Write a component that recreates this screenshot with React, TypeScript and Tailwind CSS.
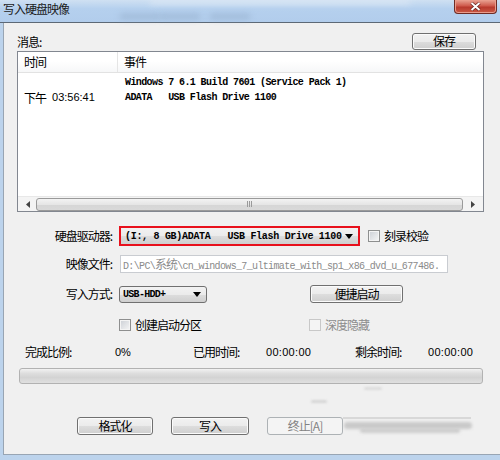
/**
 * 写入硬盘映像 — Win7 style dialog
 */

const BTN =
  "flex items-center justify-center rounded-[3px] border border-[#707070] bg-[linear-gradient(#f2f2f2_0%,#ebebeb_50%,#dddddd_51%,#cfcfcf_100%)] shadow-[inset_0_0_0_1px_#fbfbfb] text-[12px] tracking-[-1px] text-black";

const CJK = "font-['Noto_Sans_CJK_SC',sans-serif]";
const MONO = "font-['Liberation_Mono',monospace] font-bold text-[10px] whitespace-pre";
const NUM = "font-['Liberation_Sans',sans-serif] text-[11px]";

function Arrow() {
  return (
    <svg width="8" height="5" viewBox="0 0 8 5" aria-hidden="true">
      <path d="M0 0h8L4 5z" fill="#000" />
    </svg>
  );
}

function CheckBox({ label, disabled }: { label: string; disabled?: boolean }) {
  return (
    <div className="flex items-center gap-[4px]">
      <span
        className={
          disabled
            ? "h-[12px] w-[12px] border border-[#c8c8c8] bg-[#f4f4f4]"
            : "h-[12px] w-[12px] border border-[#8e8f8f] bg-[linear-gradient(135deg,#cbcfd5,#f6f6f6)] shadow-[inset_0_0_0_1px_#f4f4f4]"
        }
      />
      <span className={"text-[12px] tracking-[-1px] " + (disabled ? "text-[#8c8c8c]" : "text-black")}>
        {label}
      </span>
    </div>
  );
}

function Label({ text }: { text: string }) {
  return <span className="w-[108px] text-right text-[12px] tracking-[-1px]">{text}</span>;
}

export default function App() {
  return (
    <div className={"relative h-[460px] w-[500px] overflow-hidden bg-[#bcd3ec] text-black " + CJK}>
      {/* Title bar */}
      <div className="relative flex h-[23px] border-b border-[#5d6976] bg-[linear-gradient(#cfe0f2,#b5d0ee_40%,#b2cdec)]">
        <div className="pointer-events-none absolute left-[120px] top-[14px] h-[5px] w-[40px] bg-[#8fa9c6] opacity-60 blur-[3px]" />
        <div className="pointer-events-none absolute left-[160px] top-[14px] h-[5px] w-[40px] bg-[#8fa9c6] opacity-60 blur-[3px]" />
        <div className="pointer-events-none absolute left-[210px] top-[14px] h-[5px] w-[40px] bg-[#8fa9c6] opacity-60 blur-[3px]" />
        <div className="pointer-events-none absolute left-[150px] top-0 h-[4px] w-[260px] bg-[#e6eef7] opacity-70 blur-[3px]" />
        <span className="pl-[3px] pt-[1px] text-[12px] leading-[16px] tracking-[-1px] text-[#1b1b1b]">
          写入硬盘映像
        </span>
        <div className="ml-auto mr-[3px] flex h-[14px] w-[43px] items-center justify-center rounded-b-[4px] border border-t-0 border-[#6e2b24] bg-[linear-gradient(#e8a393,#cf5a4c_45%,#b8392d_55%,#c95a45)] shadow-[inset_0_0_0_1px_#e99c8c]">
          <svg width="11" height="9" viewBox="0 0 11 9" aria-hidden="true">
            <path d="M1.5 1l8 7M9.5 1l-8 7" stroke="#5a1c16" strokeWidth="3.2" />
            <path d="M1.5 1l8 7M9.5 1l-8 7" stroke="#fff" strokeWidth="2" />
          </svg>
        </div>
      </div>

      {/* Client area */}
      <div className="ml-[3px] flex h-[432px] w-[497px] flex-col border-b border-l border-[#98a5b3] bg-[#f0f0f0]">
        <div className="ml-[13px] mt-[10px] flex h-[16px] w-[467px] items-center justify-between">
          <span className="pt-[2px] text-[12px] tracking-[-1px]">消息:</span>
          <button className={BTN + " mr-[8px] h-[17px] w-[64px]"}>保存</button>
        </div>

        {/* Message list */}
        <div className="ml-[13px] mt-[2px] flex h-[161px] w-[467px] flex-col border border-[#828790] bg-white">
          <div className="flex h-[21px] border-b border-[#e2e2e2] bg-[linear-gradient(#ffffff,#ffffff_45%,#f6f7f8)]">
            <div className="flex w-[100px] items-center border-r border-[#e5e5e5] pl-[6px] text-[12px] tracking-[-1px]">
              时间
            </div>
            <div className="flex items-center pl-[6px] text-[12px] tracking-[-1px]">事件</div>
          </div>
          <div className="pt-[2px]">
            <div className="flex h-[15px] items-center">
              <div className="w-[100px]" />
              <span className={MONO + " pl-[7px] tracking-[-0.6px]"}>
                Windows 7 6.1 Build 7601 (Service Pack 1)
              </span>
            </div>
            <div className="flex h-[15px] items-center">
              <div className="flex w-[100px] items-center gap-[6px] pl-[6px]">
                <span className="text-[12px] tracking-[-1px]">下午</span>
                <span className={NUM}>03:56:41</span>
              </div>
              <span className={MONO + " pl-[7px] tracking-[-0.6px]"}>
                {"ADATA   USB Flash Drive 1100"}
              </span>
            </div>
          </div>
          <div className="flex-1" />
          {/* Horizontal scrollbar */}
          <div className="flex h-[15px] items-center border-t border-[#e8e8e8] bg-[#f4f4f4] px-[1px]">
            <div className="flex w-[17px] items-center justify-center">
              <svg width="4" height="7" viewBox="0 0 4 7" aria-hidden="true">
                <path d="M4 0v7L0 3.5z" fill="#444" />
              </svg>
            </div>
            <div className="flex h-[13px] flex-1 items-center justify-center rounded-[3px] border border-[#9a9a9a] bg-[linear-gradient(#f3f3f3,#e6e6e6_50%,#d6d6d6_51%,#d9d9d9)]">
              <span className="h-[6px] w-[5px] border-x border-[#9a9a9a] bg-[linear-gradient(90deg,transparent_40%,#9a9a9a_40%,#9a9a9a_60%,transparent_60%)]" />
            </div>
            <div className="flex w-[19px] items-center justify-center">
              <svg width="4" height="7" viewBox="0 0 4 7" aria-hidden="true">
                <path d="M0 0v7l4-3.5z" fill="#444" />
              </svg>
            </div>
          </div>
        </div>

        {/* Drive */}
        <div className="mt-[14px] flex h-[20px] items-center">
          <Label text="硬盘驱动器:" />
          <div className="ml-[7px] flex h-[20px] w-[241px] items-center justify-between border-2 border-[#e8101c] bg-[linear-gradient(#f2f2f2_0%,#ebebeb_50%,#dddddd_51%,#cfcfcf_100%)] pl-[4px] pr-[5px]">
            <span className={MONO + " tracking-[-0.3px]"}>{"(I:, 8 GB)ADATA   USB Flash Drive 1100"}</span>
            <Arrow />
          </div>
          <div className="ml-[8px]">
            <CheckBox label="刻录校验" />
          </div>
        </div>

        {/* Image file */}
        <div className="mt-[9px] flex h-[18px] items-center">
          <Label text="映像文件:" />
          <div className="ml-[8px] flex h-[18px] w-[328px] items-center overflow-hidden border border-[#c9ccd1] bg-white pl-[2px]">
            <span className={MONO + " font-normal tracking-[-0.65px] text-[#8a8a8a]"}>
              {"D:\\PC\\"}
              <span className={CJK + " text-[12px] tracking-[-1px]"}>系统</span>
              {"\\cn_windows_7_ultimate_with_sp1_x86_dvd_u_677486."}
            </span>
          </div>
        </div>

        {/* Write mode */}
        <div className="mt-[12px] flex h-[18px] items-center">
          <Label text="写入方式:" />
          <div className="ml-[7px] flex h-[17px] w-[88px] items-center justify-between rounded-[3px] border border-[#707070] bg-[linear-gradient(#f2f2f2_0%,#ebebeb_50%,#dddddd_51%,#cfcfcf_100%)] pl-[3px] pr-[5px]">
            <span className={MONO + " tracking-[-0.7px]"}>USB-HDD+</span>
            <Arrow />
          </div>
          <button className={BTN + " ml-[103px] h-[18px] w-[93px]"}>便捷启动</button>
        </div>

        {/* Options */}
        <div className="mt-[16px] flex h-[12px] items-center pl-[115px]">
          <CheckBox label="创建启动分区" />
          <div className="ml-[108px]">
            <CheckBox label="深度隐藏" disabled />
          </div>
        </div>

        {/* Progress labels */}
        <div className="mt-[13px] flex h-[16px] items-center pl-[21px] text-[12px] tracking-[-1px]">
          <span className="w-[90px]">完成比例:</span>
          <span className={NUM + " w-[78px] tracking-normal"}>0%</span>
          <span className="w-[73px]">已用时间:</span>
          <span className={NUM + " w-[89px] tracking-[0.3px]"}>00:00:00</span>
          <span className="w-[73px]">剩余时间:</span>
          <span className={NUM + " tracking-[0.3px]"}>00:00:00</span>
        </div>

        {/* Progress bar */}
        <div className="ml-[15px] mt-[8px] h-[16px] w-[464px] rounded-[3px] border border-[#b2b2b2] bg-[linear-gradient(#f2f2f2,#dedede_30%,#d3d3d3_60%,#e0e0e0)]" />

        {/* Bottom buttons */}
        <div className="relative mt-[33px] flex h-[18px] items-center gap-[18px] pl-[73px]">
          <button className={BTN + " h-[18px] w-[76px]"}>格式化</button>
          <button className={BTN + " h-[18px] w-[78px]"}>写入</button>
          <button className="flex h-[18px] w-[76px] items-center justify-center rounded-[3px] border border-[#adb2b5] bg-[#f4f4f4] text-[12px] tracking-[-1px] text-[#838383]">
            终止[A]
          </button>
          {/* watermark smear */}
          <div className="pointer-events-none absolute left-[339px] top-[0px] h-[2px] w-[128px] bg-[#d8d8d8] blur-[0.5px]" />
          <div className="pointer-events-none absolute left-[340px] top-[5px] h-[7px] w-[128px] rounded-full bg-[#c9c9c9] blur-[1.5px]" />
          <div className="pointer-events-none absolute left-[356px] top-[11px] h-[5px] w-[100px] rounded-full bg-[#cdcdcd] blur-[1.5px]" />
          <div className="pointer-events-none absolute left-[307px] top-[-17px] h-[3px] w-[16px] rounded-full bg-[#d6d6d6] blur-[1px]" />
          <div className="pointer-events-none absolute left-[360px] top-[-30px] h-[3px] w-[18px] rounded-full bg-[#dcdcdc] blur-[1px]" />
        </div>
      </div>
    </div>
  );
}
